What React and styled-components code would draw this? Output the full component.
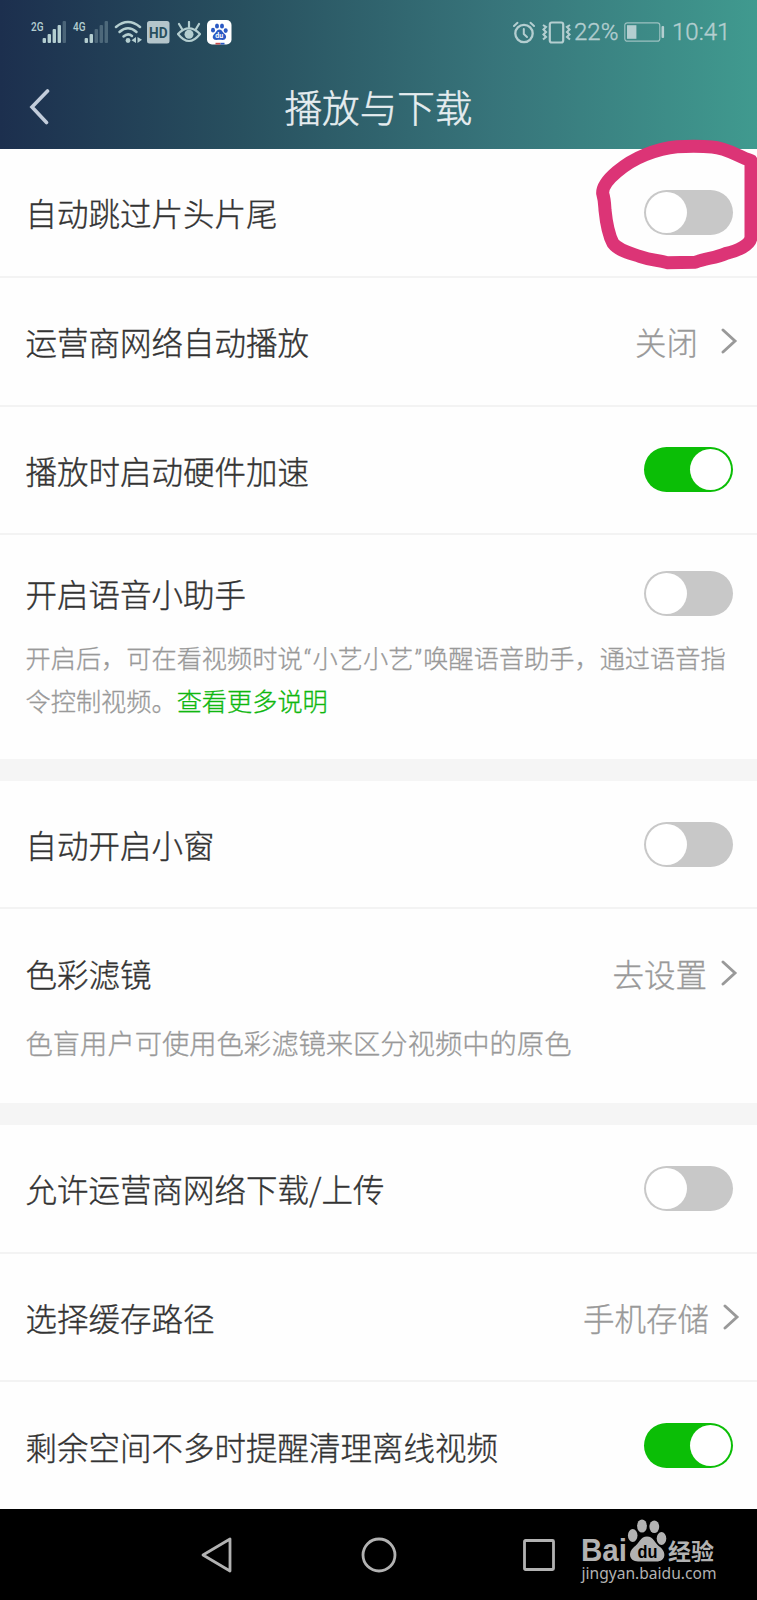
import styled, { createGlobalStyle } from "styled-components";

const GlobalStyle = createGlobalStyle`
    * {
        box-sizing: border-box;
    }

    body {
        margin: 0;
        background-color: #fefefe;
        font-family: "Noto Sans CJK SC", sans-serif;
        font-weight: 300;
    }
`;

const Page = styled.div`
    position: relative;
    display: flex;
    flex-direction: column;
    width: 757px;
    height: 1600px;
    overflow: hidden;
`;

const Header = styled.header`
    height: 149px;
    flex: none;
    background: linear-gradient(
        90deg,
        #1c2f4e 0%,
        #28505f 32%,
        #37747a 65%,
        #409a8f 100%
    );
`;

const StatusBar = styled.div`
    display: flex;
    justify-content: space-between;
    height: 64px;
    padding: 0 28px 0 30px;
    color: #b4ced0;
`;

const StatusGroup = styled.div`
    display: flex;
    align-items: center;

    & svg {
        display: block;
        flex: none;
    }
`;

const StatusText = styled.span`
    width: ${({ $width }) => $width};
    margin-left: ${({ $left }) => $left};
    font-family: Roboto, sans-serif;
    font-size: 24px;
    font-weight: 300;
    line-height: 66px;
    white-space: nowrap;
    -webkit-text-stroke: 0.4px currentColor;
`;

const TitleBar = styled.div`
    display: grid;
    grid-template-columns: 80px 1fr 80px;
    align-items: center;
    height: 85px;
    color: #e6edf0;

    & svg {
        display: block;
        margin-left: 28px;
    }

    & h1 {
        margin: 0 0 2px;
        font-size: 37.6px;
        font-weight: 300;
        line-height: 50px;
        text-align: center;
        -webkit-text-stroke: 0.5px currentColor;
    }
`;

const Section = styled.section`
    border-bottom: ${({ $last }) => ($last ? "none" : "22px solid #f5f5f5")};
`;

const Row = styled.div`
    height: ${({ $height }) => $height || "128.4px"};
    padding: 0 24px 0 25.5px;
    border-bottom: ${({ $last }) => ($last ? "none" : "2px solid #f3f3f3")};
`;

const RowMain = styled.div`
    display: flex;
    align-items: center;
    justify-content: space-between;
    height: ${({ $height }) => $height || "126.4px"};
`;

const Label = styled.span`
    color: #333;
    font-size: 31.5px;
    line-height: 46px;
    white-space: nowrap;
    -webkit-text-stroke: 0.35px currentColor;
`;

const Value = styled.span`
    display: flex;
    align-items: center;
    margin-right: ${({ $shift }) => $shift || "-5px"};
    color: #999;
    font-size: 31.5px;
    line-height: 46px;
    white-space: nowrap;
    -webkit-text-stroke: 0.3px currentColor;

    & svg {
        margin-left: ${({ $gap }) => $gap || "14px"};
    }
`;

const Description = styled.p`
    margin: ${({ $top }) => $top} 0 0;
    color: #999;
    font-size: ${({ $size }) => $size || "25.2px"};
    line-height: 42.4px;
    white-space: nowrap;
    -webkit-text-stroke: 0.3px currentColor;

    & q {
        quotes: none;
    }

    & q::before,
    & q::after {
        display: inline-block;
        width: 10px;
        font-family: Roboto, sans-serif;
        font-weight: 300;
        line-height: 1;
        text-align: center;
    }

    & q::before {
        content: "“";
    }

    & q::after {
        content: "”";
    }

    & a {
        color: #0fb70f;
    }
`;

const Track = styled.span`
    display: flex;
    justify-content: ${({ $on }) => ($on ? "flex-end" : "flex-start")};
    width: 89px;
    height: 45px;
    padding: 2px;
    border-radius: 23px;
    background-color: ${({ $on }) => ($on ? "#0bbe06" : "#c8c8c8")};
`;

const Knob = styled.span`
    width: 41px;
    height: 41px;
    border-radius: 50%;
    background-color: #fff;
`;

const NavBar = styled.nav`
    display: flex;
    align-items: center;
    flex: none;
    height: 91px;
    margin-top: auto;
    padding-left: 200px;
    background-color: #000;
    color: #b2b2b2;

    & svg {
        display: block;
        flex: none;
    }
`;

const NavButton = styled.span`
    margin-right: ${({ $gap }) => $gap};
`;

const Logo = styled.svg`
    margin-bottom: 5px;
    overflow: visible;
`;

const Marker = styled.svg`
    position: absolute;
    top: 130px;
    left: 577px;
`;

const Toggle = ({ on }) => (
    <Track $on={on}>
        <Knob />
    </Track>
);

const Chevron = () => (
    <svg width="17" height="28" viewBox="0 0 17 28" fill="none">
        <path
            d="M2 3 L14 14 L2 25"
            stroke="#999"
            strokeWidth="2.9"
            strokeLinecap="round"
        />
    </svg>
);

const Signal = ({ text, level }) => {
    const bars = [5, 9, 14, 18, 22];
    return (
        <svg width="42" height="24" viewBox="0 0 42 24" fill="currentColor">
            <text
                x="1"
                y="11"
                fontFamily="Roboto, sans-serif"
                fontSize="13"
                fontWeight="500"
                textLength="12.5"
                lengthAdjust="spacingAndGlyphs"
            >
                {text}
            </text>
            {bars.map((height, i) => (
                <rect
                    key={height}
                    x={12.6 + i * 5}
                    y={23 - height}
                    width="3.4"
                    height={height}
                    rx="1"
                    opacity={i < level ? 1 : 0.3}
                />
            ))}
        </svg>
    );
};

const WifiIcon = () => (
    <svg width="28" height="24" viewBox="0 0 28 24" fill="none">
        <g stroke="currentColor" strokeWidth="2.5" strokeLinecap="round">
            <path d="M2 7 Q14 -3 26 7" />
            <path d="M5.5 12 Q14 4.5 22.5 12" />
            <path d="M9.5 16.5 Q14 12.5 18 16" />
        </g>
        <circle cx="14" cy="20.5" r="2.4" fill="currentColor" />
        <path
            d="M22 17 V23 L17.5 20.3 Z M23.5 17 V23 L28 19.7 Z"
            fill="currentColor"
        />
    </svg>
);

const HdIcon = () => (
    <svg width="23" height="23" viewBox="0 0 23 23">
        <rect width="22.5" height="22.5" rx="2.5" fill="#b4c5cb" />
        <text
            x="2"
            y="16.8"
            fill="#284e5d"
            fontFamily="Roboto, sans-serif"
            fontSize="15"
            fontWeight="700"
            textLength="18.5"
            lengthAdjust="spacingAndGlyphs"
        >
            HD
        </text>
    </svg>
);

const EyeIcon = () => (
    <svg width="24" height="22" viewBox="0 0 24 22" fill="none">
        <g stroke="currentColor" strokeWidth="2.2" strokeLinecap="round">
            <path d="M1 13 Q12 2 23 13 Q12 27 1 13 Z" strokeLinejoin="round" />
            <path d="M12 1 V6 M2 3 L5 8 M22 3 L19 8" />
        </g>
        <circle cx="12" cy="13.3" r="4.5" fill="currentColor" />
    </svg>
);

const PawIcon = () => (
    <svg width="25" height="25" viewBox="0 0 25 25">
        <rect width="24.5" height="24.5" rx="5" fill="#fff" />
        <g fill="#2b59c3">
            <ellipse cx="6" cy="10.2" rx="2" ry="2.4" />
            <ellipse cx="10" cy="6" rx="2" ry="2.6" />
            <ellipse cx="15" cy="6" rx="2" ry="2.6" />
            <ellipse cx="18.7" cy="10.6" rx="2" ry="2.3" />
            <path d="M12.4 9.5 C15 9.5 15.5 12.5 18 14.3 C20.5 17 18.5 20.3 15.5 20 C13.5 19.7 11.5 19.7 9.5 20 C6 20.2 4.5 17 7 14.3 C9.3 12.5 9.7 9.5 12.4 9.5 Z" />
        </g>
        <text
            x="8.3"
            y="18.3"
            fill="#fff"
            fontFamily="Roboto, sans-serif"
            fontSize="7"
            fontWeight="700"
        >
            du
        </text>
        <rect x="8.5" y="22.8" width="5" height="1.7" fill="#c74a4a" />
        <rect x="13.5" y="22.8" width="4" height="1.7" fill="#2b59c3" />
    </svg>
);

const AlarmIcon = () => (
    <svg width="22" height="23" viewBox="0 0 22 23" fill="none">
        <g stroke="currentColor" strokeLinecap="round" strokeLinejoin="round">
            <circle cx="11" cy="12.5" r="8.7" strokeWidth="2.3" />
            <path d="M1 5 L4.5 1.8 M21 5 L17.5 1.8" strokeWidth="2" />
            <path d="M10.8 8 V13 L14 16" strokeWidth="2" />
        </g>
    </svg>
);

const VibrateIcon = () => (
    <svg width="29" height="23" viewBox="0 0 29 23" fill="none">
        <g stroke="currentColor">
            <rect x="7.8" y="1.5" width="13.4" height="20" rx="2" strokeWidth="2.2" />
            <path
                d="M1 4 L4 6 L1.5 8.5 L4 11 L1.5 13.5 L4 16 L1 18.5 M28 4 L25 6 L27.5 8.5 L25 11 L27.5 13.5 L25 16 L28 18.5"
                strokeWidth="2.1"
            />
        </g>
    </svg>
);

const BatteryIcon = () => (
    <svg width="41" height="20" viewBox="0 0 41 20" fill="none">
        <rect
            x="0.8"
            y="0.8"
            width="35"
            height="18.4"
            rx="2.5"
            stroke="currentColor"
            strokeWidth="1.2"
            opacity="0.8"
        />
        <rect x="3" y="3.2" width="9.4" height="13.6" fill="currentColor" />
        <rect x="37.5" y="4" width="2.6" height="12" rx="1" fill="currentColor" />
    </svg>
);

const Spacer = styled.span`
    width: ${({ $width }) => $width};
`;

const BaiduLogo = () => (
    <Logo width="140" height="72" viewBox="0 0 140 72" fill="currentColor">
        <text
            x="2"
            y="45"
            fontFamily="Liberation Sans, sans-serif"
            fontSize="31"
            fontWeight="700"
            textLength="46"
            lengthAdjust="spacingAndGlyphs"
        >
            Bai
        </text>
        <ellipse cx="53.7" cy="19.5" rx="4.8" ry="6.4" />
        <ellipse cx="63" cy="10" rx="4.9" ry="6.6" />
        <ellipse cx="75.3" cy="10.8" rx="4.9" ry="6.3" />
        <ellipse cx="82.5" cy="22.5" rx="4.8" ry="6.4" />
        <path d="M68 20.5 C74.5 20.5 75.5 27 81 31 C88 36.5 86.5 45.5 77.5 45.5 H59 C50 45.5 48.5 36.5 55 31 C60.5 27 61.5 20.5 68 20.5 Z" />
        <text
            x="58.5"
            y="42"
            fill="#000"
            fontFamily="Liberation Sans, sans-serif"
            fontSize="18"
            fontWeight="700"
            textLength="20"
            lengthAdjust="spacingAndGlyphs"
        >
            du
        </text>
        <text
            x="89"
            y="43.5"
            fontFamily="Noto Sans CJK SC, sans-serif"
            fontSize="23"
            fontWeight="700"
        >
            经验
        </text>
        <text
            x="2.5"
            y="62.8"
            fontFamily="Noto Sans, sans-serif"
            fontSize="16.5"
            fontWeight="400"
            textLength="135"
            lengthAdjust="spacingAndGlyphs"
        >
            jingyan.baidu.com
        </text>
    </Logo>
);

const StatusIcons = () => (
    <StatusBar>
        <StatusGroup>
            <Signal text="2G" level={4} />
            <Signal text="4G" level={2} />
            <WifiIcon />
            <Spacer $width="5px" />
            <HdIcon />
            <Spacer $width="7px" />
            <EyeIcon />
            <Spacer $width="6px" />
            <PawIcon />
        </StatusGroup>
        <StatusGroup>
            <AlarmIcon />
            <Spacer $width="7px" />
            <VibrateIcon />
            <StatusText $width="47px" $left="3px">
                22%
            </StatusText>
            <Spacer $width="3px" />
            <BatteryIcon />
            <StatusText $width="57px" $left="7px">
                10:41
            </StatusText>
        </StatusGroup>
    </StatusBar>
);

export default function App() {
    return (
        <Page>
            <GlobalStyle />
            <Header>
                <StatusIcons />
                <TitleBar>
                    <svg width="22" height="38" viewBox="0 0 22 38" fill="none">
                        <path
                            d="M19.5 3 L4 19 L18.5 34.5"
                            stroke="#c3cddb"
                            strokeWidth="3.6"
                            strokeLinecap="round"
                        />
                    </svg>
                    <h1>播放与下载</h1>
                </TitleBar>
            </Header>

            <Section>
                <Row $height="129.2px">
                    <RowMain>
                        <Label>自动跳过片头片尾</Label>
                        <Toggle />
                    </RowMain>
                </Row>
                <Row>
                    <RowMain>
                        <Label>运营商网络自动播放</Label>
                        <Value $gap="23px">
                            关闭
                            <Chevron />
                        </Value>
                    </RowMain>
                </Row>
                <Row>
                    <RowMain>
                        <Label>播放时启动硬件加速</Label>
                        <Toggle on />
                    </RowMain>
                </Row>
                <Row $height="224px" $last>
                    <RowMain $height="117px">
                        <Label>开启语音小助手</Label>
                        <Toggle />
                    </RowMain>
                    <Description $top="-15.5px">
                        开启后，可在看视频时说<q>小艺小艺</q>唤醒语音助手，通过语音指
                        <br />
                        令控制视频。<a>查看更多说明</a>
                    </Description>
                </Row>
            </Section>

            <Section>
                <Row>
                    <RowMain>
                        <Label>自动开启小窗</Label>
                        <Toggle />
                    </RowMain>
                </Row>
                <Row $height="193.6px" $last>
                    <RowMain $height="127.5px">
                        <Label>色彩滤镜</Label>
                        <Value>
                            去设置
                            <Chevron />
                        </Value>
                    </RowMain>
                    <Description $top="-15.5px" $size="27.3px">
                        色盲用户可使用色彩滤镜来区分视频中的原色
                    </Description>
                </Row>
            </Section>

            <Section $last>
                <Row $height="129px">
                    <RowMain>
                        <Label>允许运营商网络下载/上传</Label>
                        <Toggle />
                    </RowMain>
                </Row>
                <Row>
                    <RowMain>
                        <Label>选择缓存路径</Label>
                        <Value $shift="-7px">
                            手机存储
                            <Chevron />
                        </Value>
                    </RowMain>
                </Row>
                <Row $height="127px" $last>
                    <RowMain>
                        <Label>剩余空间不多时提醒清理离线视频</Label>
                        <Toggle on />
                    </RowMain>
                </Row>
            </Section>

            <NavBar>
                <NavButton $gap="126.5px">
                    <svg width="33" height="38" viewBox="0 0 33 38" fill="none">
                        <path
                            d="M3 19 L30 3 V35 Z"
                            stroke="currentColor"
                            strokeWidth="2.8"
                            strokeLinejoin="round"
                        />
                    </svg>
                </NavButton>
                <NavButton $gap="125.5px">
                    <svg width="38" height="38" viewBox="0 0 38 38" fill="none">
                        <circle
                            cx="19"
                            cy="19"
                            r="16"
                            stroke="currentColor"
                            strokeWidth="2.8"
                        />
                    </svg>
                </NavButton>
                <NavButton $gap="23.5px">
                    <svg width="32" height="32" viewBox="0 0 32 32" fill="none">
                        <rect
                            x="1.5"
                            y="1.5"
                            width="29"
                            height="29"
                            rx="1"
                            stroke="currentColor"
                            strokeWidth="2.8"
                        />
                    </svg>
                </NavButton>
                <BaiduLogo />
            </NavBar>

            <Marker width="180" height="150" viewBox="0 0 540 450" fill="none">
                <path
                    d="M522 92 C480 78 450 54 405 51 C370 48 330 49 300 50 C265 53 235 62 205 74 C170 88 145 104 120 125 C95 146 76 170 77 190 C83 210 83 225 84 240 C88 280 95 315 108 340 C125 362 155 368 190 380 C225 392 245 390 270 398 L355 397 C385 385 415 384 445 371 C480 363 522 345 522 320 Z"
                    stroke="#dc3476"
                    strokeWidth="39"
                    strokeLinejoin="round"
                />
            </Marker>
        </Page>
    );
}
